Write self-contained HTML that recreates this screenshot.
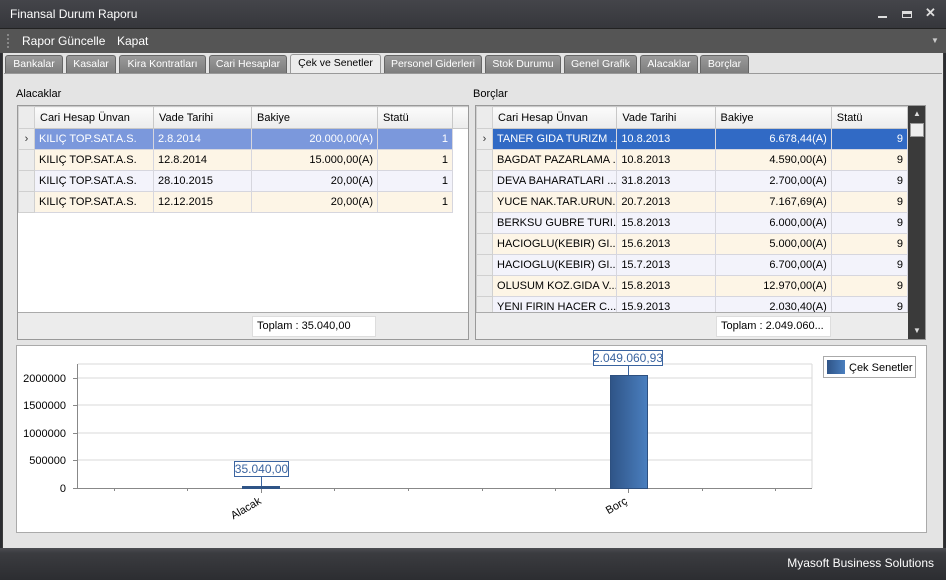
<!DOCTYPE html>
<html><head><meta charset="utf-8"><style>
*{margin:0;padding:0;box-sizing:border-box}
body{width:946px;height:580px;overflow:hidden;background:#2b2c30;font-family:"Liberation Sans",sans-serif;font-size:11px;color:#000;position:relative}
.a{position:absolute}
.title{left:0;top:0;width:946px;height:29px;background:linear-gradient(#44454a,#36373c);color:#fff;font-size:12px;line-height:29px;padding-left:10px;border-bottom:1px solid #222}
.menu{left:0;top:29px;width:946px;height:24px;background:#555;color:#fff;font-size:12px;line-height:24px}
.tabbar{left:2px;top:53px;width:942px;height:495px;background:#e4e4e4;border-left:1px solid #3a3a3a;border-right:1px solid #3a3a3a}
.tab{top:55px;height:19px;background:linear-gradient(#9a9a9a,#7c7c7c);color:#fff;border:1px solid #666;border-bottom:none;border-radius:3px 3px 0 0;text-align:center;line-height:17px;font-size:10.5px;white-space:nowrap;overflow:hidden}
.tab.on{background:#ececec;color:#000;top:54px;height:20px;border-color:#999}
.status{left:0;top:548px;width:946px;height:32px;background:linear-gradient(#4c4d52 0,#3b3c40 5px,#2c2d31 100%);color:#fff;font-size:12px;text-align:right;line-height:30px;padding-right:12px}
.grid{background:#fff;border:1px solid #999;overflow:hidden}
table{border-collapse:collapse;table-layout:fixed;position:absolute;left:0;top:0}
td{height:21px;border:1px solid #d6d6de;padding:0 4px;white-space:nowrap;overflow:hidden;font-size:11px}
th{height:22px;background:linear-gradient(#fbfbfb,#ececec);border:1px solid #c8c8c8;font-weight:normal;text-align:left;padding-left:5px;font-size:11px}
td.i,th.i{background:#ececec;padding:0;border-color:#d0d0d0;text-align:center}
tr.e td{background:#fdf5e6}tr.o td{background:#f3f3fb}
td.r{text-align:right}
tr.s1 td{background:#7b98dc;color:#fff}
tr.s2 td{background:#316ac5;color:#fff}
tr td.i{background:#ececec!important;color:#333!important}
tr td.w{background:#fff!important;border:none}
.foot{background:#ececec;border-top:1px solid #aaa}
</style></head><body>
<div class="a title">Finansal Durum Raporu</div>
<div class="a" style="left:878px;top:16px;width:9px;height:2px;background:#ddd"></div>
<div class="a" style="left:902px;top:11px;width:10px;height:7px;border:1px solid #ddd;border-top:3px solid #ddd"></div>
<div class="a" style="left:925px;top:5px;color:#ddd;font-size:13px;font-weight:bold">✕</div>
<div class="a menu"><span style="position:absolute;left:7px;top:5px;width:2px;height:14px;border-left:2px dotted #888"></span><span style="position:absolute;left:22px">Rapor Güncelle</span><span style="position:absolute;left:117px">Kapat</span><span style="position:absolute;left:931px;top:0;font-size:8px;color:#ccc">▼</span></div>
<div class="a tabbar"></div>
<div class="a tab" style="left:5px;width:58px">Bankalar</div>
<div class="a tab" style="left:66px;width:50px">Kasalar</div>
<div class="a tab" style="left:119px;width:87px">Kira Kontratları</div>
<div class="a tab" style="left:209px;width:78px">Cari Hesaplar</div>
<div class="a tab on" style="left:290px;width:91px">Çek ve Senetler</div>
<div class="a tab" style="left:384px;width:98px">Personel Giderleri</div>
<div class="a tab" style="left:485px;width:76px">Stok Durumu</div>
<div class="a tab" style="left:564px;width:73px">Genel Grafik</div>
<div class="a tab" style="left:640px;width:58px">Alacaklar</div>
<div class="a tab" style="left:700px;width:49px">Borçlar</div>
<div class="a" style="left:4px;top:73px;width:938px;height:1px;background:#999"></div>

<div class="a" style="left:16px;top:88px;font-size:11px">Alacaklar</div>
<div class="a grid" style="left:17px;top:105px;width:452px;height:235px">
<table style="width:450px">
<colgroup><col style="width:16px"><col style="width:119px"><col style="width:98px"><col style="width:126px"><col style="width:75px"><col style="width:16px"></colgroup>
<tr><th class="i"></th><th>Cari Hesap Ünvan</th><th>Vade Tarihi</th><th>Bakiye</th><th>Statü</th><th></th></tr>
<tr class="s1"><td class="i">›</td><td>KILIÇ TOP.SAT.A.S.</td><td>2.8.2014</td><td class="r">20.000,00(A)</td><td class="r">1</td><td class="w"></td></tr>
<tr class="e"><td class="i"></td><td>KILIÇ TOP.SAT.A.S.</td><td>12.8.2014</td><td class="r">15.000,00(A)</td><td class="r">1</td><td class="w"></td></tr>
<tr class="o"><td class="i"></td><td>KILIÇ TOP.SAT.A.S.</td><td>28.10.2015</td><td class="r">20,00(A)</td><td class="r">1</td><td class="w"></td></tr>
<tr class="e"><td class="i"></td><td>KILIÇ TOP.SAT.A.S.</td><td>12.12.2015</td><td class="r">20,00(A)</td><td class="r">1</td><td class="w"></td></tr>
</table>
<div class="a foot" style="left:0;top:206px;width:450px;height:28px"><div class="a" style="left:234px;top:3px;width:124px;height:21px;background:#fff;border:1px solid #ddd;line-height:19px;padding-left:4px">Toplam : 35.040,00</div></div>
</div>

<div class="a" style="left:473px;top:88px;font-size:11px">Borçlar</div>
<div class="a grid" style="left:475px;top:105px;width:451px;height:235px">
<table style="width:432px">
<colgroup><col style="width:16px"><col style="width:124px"><col style="width:98px"><col style="width:116px"><col style="width:76px"></colgroup>
<tr><th class="i"></th><th>Cari Hesap Ünvan</th><th>Vade Tarihi</th><th>Bakiye</th><th>Statü</th></tr>
<tr class="s2"><td class="i">›</td><td>TANER GIDA TURIZM ...</td><td>10.8.2013</td><td class="r">6.678,44(A)</td><td class="r">9</td></tr>
<tr class="e"><td class="i"></td><td>BAGDAT PAZARLAMA ...</td><td>10.8.2013</td><td class="r">4.590,00(A)</td><td class="r">9</td></tr>
<tr class="o"><td class="i"></td><td>DEVA BAHARATLARI ...</td><td>31.8.2013</td><td class="r">2.700,00(A)</td><td class="r">9</td></tr>
<tr class="e"><td class="i"></td><td>YUCE NAK.TAR.URUN...</td><td>20.7.2013</td><td class="r">7.167,69(A)</td><td class="r">9</td></tr>
<tr class="o"><td class="i"></td><td>BERKSU GUBRE TURI...</td><td>15.8.2013</td><td class="r">6.000,00(A)</td><td class="r">9</td></tr>
<tr class="e"><td class="i"></td><td>HACIOGLU(KEBIR) GI...</td><td>15.6.2013</td><td class="r">5.000,00(A)</td><td class="r">9</td></tr>
<tr class="o"><td class="i"></td><td>HACIOGLU(KEBIR) GI...</td><td>15.7.2013</td><td class="r">6.700,00(A)</td><td class="r">9</td></tr>
<tr class="e"><td class="i"></td><td>OLUSUM KOZ.GIDA V...</td><td>15.8.2013</td><td class="r">12.970,00(A)</td><td class="r">9</td></tr>
<tr class="o"><td class="i"></td><td>YENI FIRIN HACER C...</td><td>15.9.2013</td><td class="r">2.030,40(A)</td><td class="r">9</td></tr>
</table>
<div class="a foot" style="left:0;top:206px;width:432px;height:28px"><div class="a" style="left:240px;top:3px;width:115px;height:21px;background:#fff;border:1px solid #ddd;line-height:19px;padding-left:4px;white-space:nowrap">Toplam : 2.049.060...</div></div>
<div class="a" style="left:432px;top:0;width:18px;height:233px;background:#3a3a3a"><div class="a" style="left:2px;top:17px;width:14px;height:14px;background:#eee;border:1px solid #999"></div><div class="a" style="left:5px;top:3px;color:#ddd;font-size:8px">▲</div><div class="a" style="left:5px;top:220px;color:#ddd;font-size:8px">▼</div></div>
</div>

<div class="a" style="left:16px;top:345px;width:911px;height:188px;background:#fff;border:1px solid #aaa"></div>
<svg class="a" style="left:0;top:0" width="946" height="580" font-family="Liberation Sans, sans-serif" font-size="11">
<g stroke="#dadada"><line x1="78" y1="378" x2="812" y2="378"/><line x1="78" y1="405" x2="812" y2="405"/><line x1="78" y1="433" x2="812" y2="433"/><line x1="78" y1="460" x2="812" y2="460"/><line x1="78" y1="364" x2="812" y2="364"/><line x1="812" y1="364" x2="812" y2="488"/></g>
<line x1="77.5" y1="364" x2="77.5" y2="488" stroke="#888"/>
<line x1="77" y1="488.5" x2="812" y2="488.5" stroke="#888"/>
<g stroke="#888"><line x1="73" y1="378.5" x2="78" y2="378.5"/><line x1="73" y1="405.5" x2="78" y2="405.5"/><line x1="73" y1="433.5" x2="78" y2="433.5"/><line x1="73" y1="460.5" x2="78" y2="460.5"/><line x1="73" y1="488.5" x2="78" y2="488.5"/>
<line x1="114.5" y1="488" x2="114.5" y2="491"/><line x1="187.5" y1="488" x2="187.5" y2="491"/><line x1="261.5" y1="488" x2="261.5" y2="493"/><line x1="334.5" y1="488" x2="334.5" y2="491"/><line x1="408.5" y1="488" x2="408.5" y2="491"/><line x1="482.5" y1="488" x2="482.5" y2="491"/><line x1="555.5" y1="488" x2="555.5" y2="491"/><line x1="628.5" y1="488" x2="628.5" y2="493"/><line x1="702.5" y1="488" x2="702.5" y2="491"/><line x1="775.5" y1="488" x2="775.5" y2="491"/></g>
<g text-anchor="end" fill="#000"><text x="66" y="382">2000000</text><text x="66" y="409">1500000</text><text x="66" y="437">1000000</text><text x="66" y="464">500000</text><text x="66" y="492">0</text></g>
<defs><linearGradient id="b" x1="0" x2="1"><stop offset="0" stop-color="#2f5487"/><stop offset="1" stop-color="#4a7fbf"/></linearGradient></defs>
<rect x="610.5" y="375.5" width="37" height="113" fill="url(#b)" stroke="#2d5080"/>
<rect x="242" y="486" width="38" height="3" fill="#2f5487"/>
<line x1="628.5" y1="366" x2="628.5" y2="375" stroke="#3a64a0"/>
<line x1="261.5" y1="476" x2="261.5" y2="486" stroke="#3a64a0"/>
<rect x="593.5" y="350.5" width="69" height="15" fill="#fff" stroke="#3a64a0"/>
<text x="628" y="362" text-anchor="middle" fill="#3a64a0" font-size="12">2.049.060,93</text>
<rect x="234.5" y="461.5" width="54" height="15" fill="#fff" stroke="#3a64a0"/>
<text x="261.5" y="473" text-anchor="middle" fill="#3a64a0" font-size="12">35.040,00</text>
<text transform="translate(262,503) rotate(-30)" text-anchor="end" fill="#000">Alacak</text>
<text transform="translate(628,503) rotate(-30)" text-anchor="end" fill="#000">Borç</text>
<rect x="823.5" y="356.5" width="92" height="21" fill="#fff" stroke="#aaa"/>
<rect x="827" y="360" width="18" height="14" fill="url(#b)"/>
<text x="849" y="371" fill="#000" font-size="11">Çek Senetler</text>
</svg>
<div class="a status">Myasoft Business Solutions</div>
</body></html>
